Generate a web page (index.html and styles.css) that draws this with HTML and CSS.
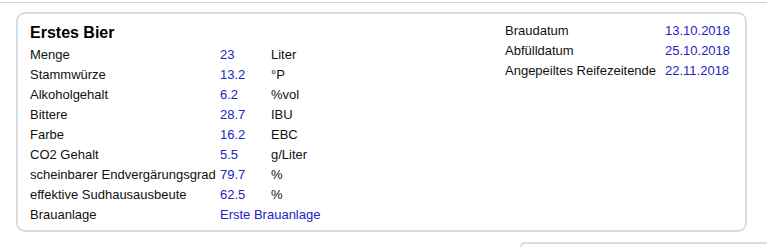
FILE: index.html
```html
<!DOCTYPE html>
<html lang="de">
<head>
<meta charset="utf-8">
<title>Erstes Bier</title>
<link rel="stylesheet" href="styles.css">
</head>
<body>
<div class="topline"></div>
<div class="card">
  <div class="left">
    <h2 class="title">Erstes Bier</h2>
    <table class="props">
      <tr><td class="lbl">Menge</td><td class="val">23</td><td class="unit">Liter</td></tr>
      <tr><td class="lbl">Stammwürze</td><td class="val">13.2</td><td class="unit">°P</td></tr>
      <tr><td class="lbl">Alkoholgehalt</td><td class="val">6.2</td><td class="unit">%vol</td></tr>
      <tr><td class="lbl">Bittere</td><td class="val">28.7</td><td class="unit">IBU</td></tr>
      <tr><td class="lbl">Farbe</td><td class="val">16.2</td><td class="unit">EBC</td></tr>
      <tr><td class="lbl">CO2 Gehalt</td><td class="val">5.5</td><td class="unit">g/Liter</td></tr>
      <tr><td class="lbl">scheinbarer Endvergärungsgrad</td><td class="val">79.7</td><td class="unit">%</td></tr>
      <tr><td class="lbl">effektive Sudhausausbeute</td><td class="val">62.5</td><td class="unit">%</td></tr>
      <tr><td class="lbl">Brauanlage</td><td class="val" colspan="2">Erste Brauanlage</td></tr>
    </table>
  </div>
  <div class="right">
    <table class="dates">
      <tr><td class="dlbl">Braudatum</td><td class="val">13.10.2018</td></tr>
      <tr><td class="dlbl">Abfülldatum</td><td class="val">25.10.2018</td></tr>
      <tr><td class="dlbl">Angepeiltes Reifezeitende</td><td class="val">22.11.2018</td></tr>
    </table>
  </div>
</div>
<div class="card next"></div>
</body>
</html>
```
FILE: styles.css
```css
html, body {
  margin: 0;
  padding: 0;
  background: #fff;
  overflow: hidden;
}
body {
  font-family: "Liberation Sans", Arial, sans-serif;
  font-size: 13px;
  color: #111;
  height: 248px;
}
.topline {
  margin-top: 2px;
  height: 1px;
  background: #d2d2d2;
}
.card {
  margin: 9px 0 0 16px;
  width: 727px;
  height: 216px;
  border: 2px solid #dcdcdc;
  border-radius: 9px;
  display: flex;
}
.left {
  padding: 9px 0 0 12px;
  width: 475px;
}
.title {
  margin: 0 0 2px 0;
  font-size: 16px;
  font-weight: bold;
  line-height: 20px;
  color: #000;
}
table {
  border-collapse: collapse;
}
td {
  padding: 0;
  height: 20px;
  line-height: 20px;
  white-space: nowrap;
  vertical-align: middle;
}
.lbl {
  width: 190px;
}
.val {
  color: #2323bf;
}
.props .val {
  width: 51px;
}
.right {
  padding: 7px 0 0 0;
}
.dlbl {
  width: 160px;
}
.next {
  margin: 10px 0 0 520px;
  width: 245px;
  height: 3px;
  border-right: none;
  border-bottom: none;
  border-radius: 9px 0 0 0;
}
```
